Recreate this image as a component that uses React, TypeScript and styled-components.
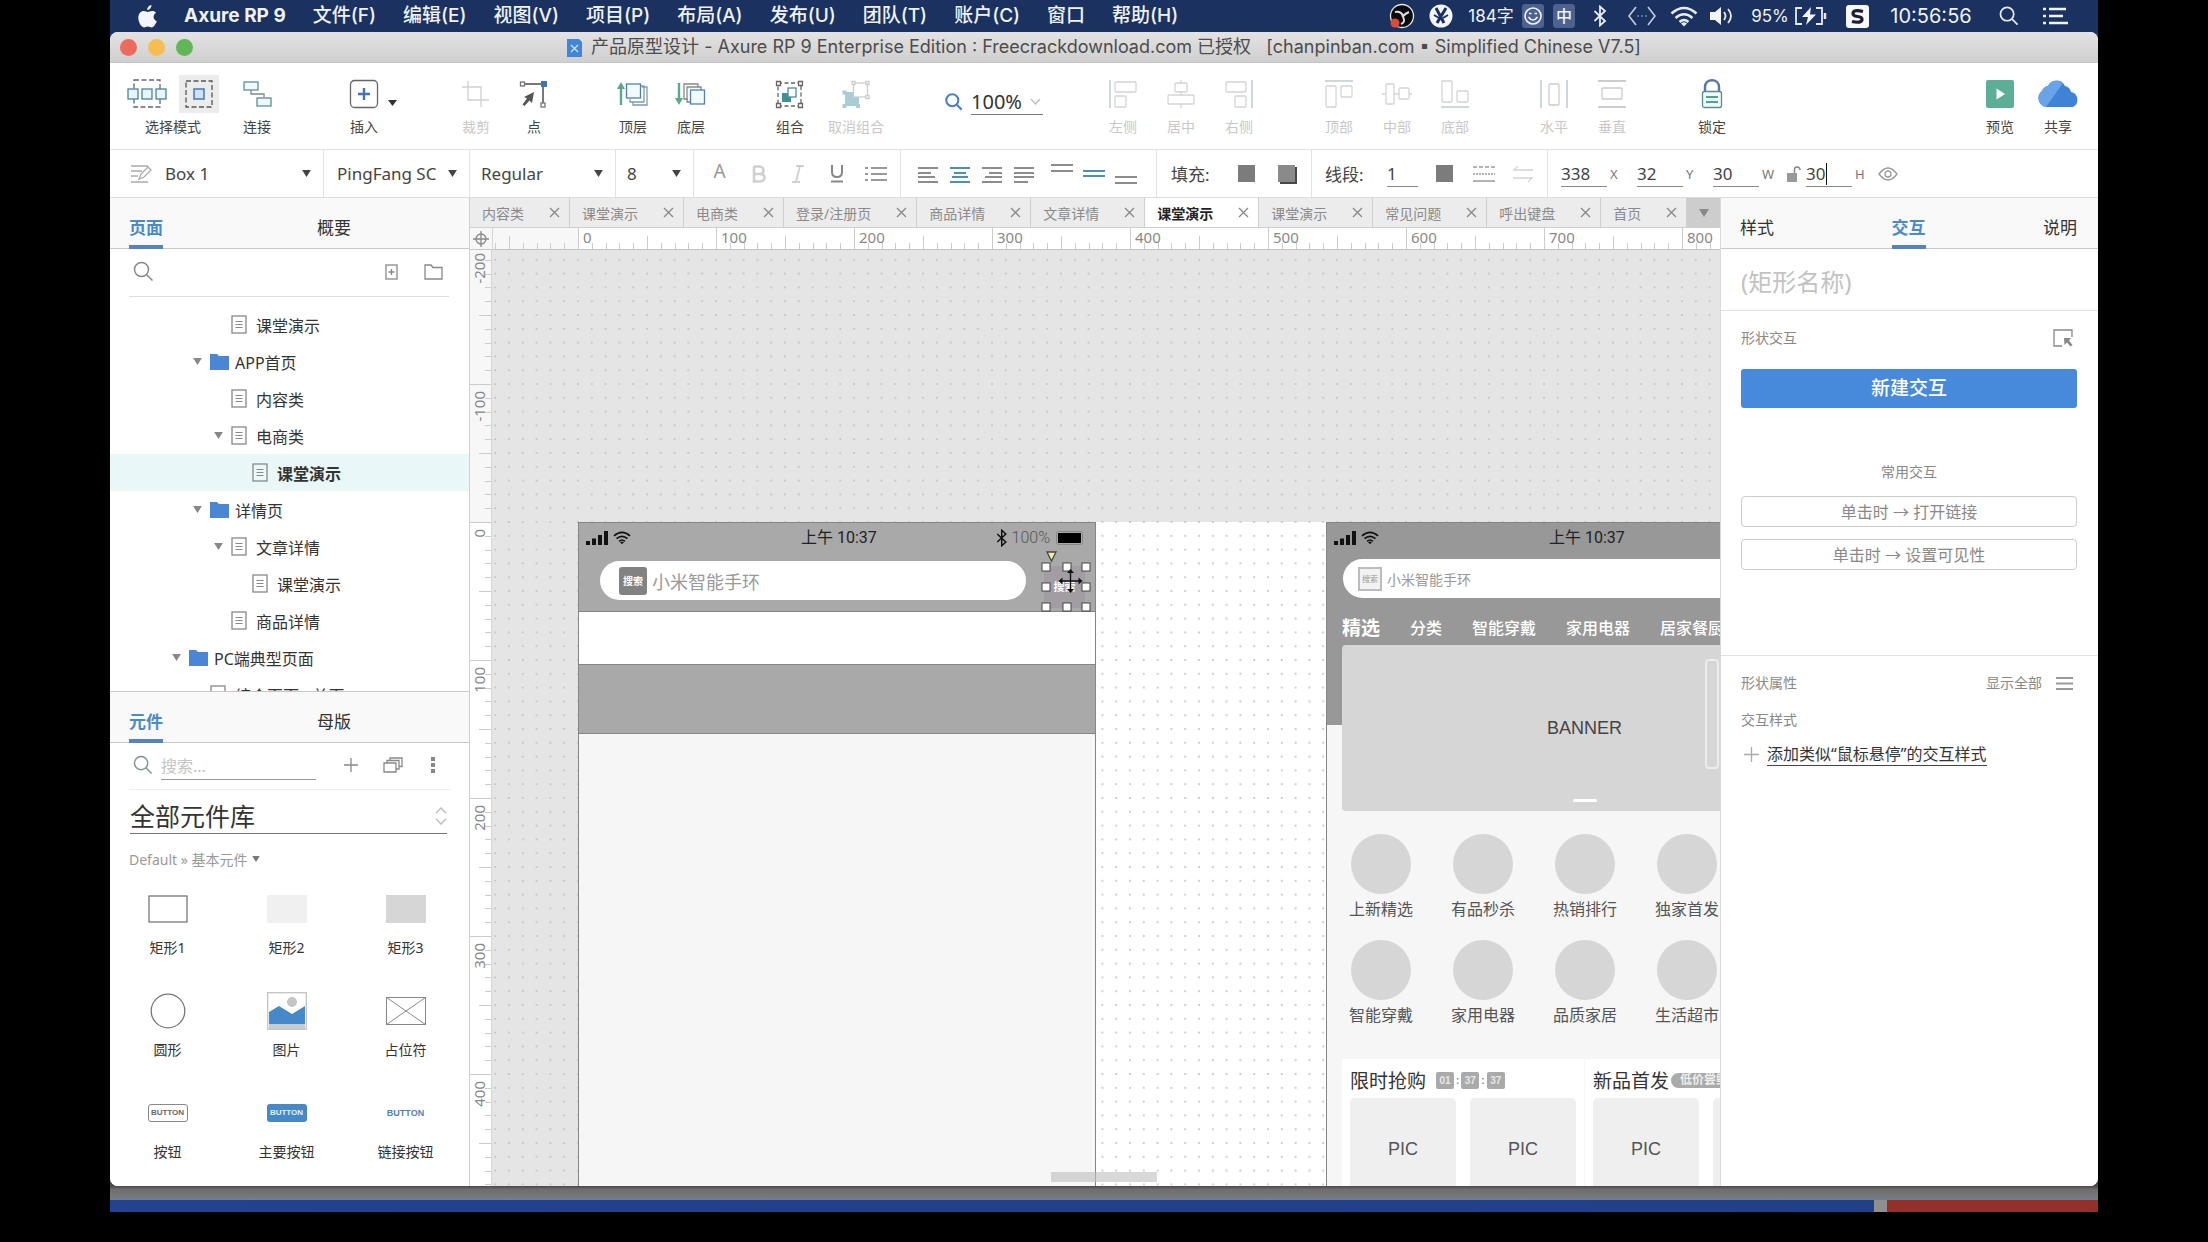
import React from "react";
import styled, { createGlobalStyle, css } from "styled-components";

const ui = `"Noto Sans", "Noto Sans CJK SC", sans-serif`;
const mac = `Inter, "Noto Sans CJK SC", sans-serif`;
const blue = "#4a8ac9";

const Global = createGlobalStyle`
  *, *::before, *::after { box-sizing: border-box; }
  body { margin: 0; background: #000; font-family: ${ui}; color: #444; }
  button, input, select { font: inherit; color: inherit; margin: 0; padding: 0; border: 0; background: none; border-radius: 0; outline: none; }
  button { cursor: pointer; }
  select { appearance: none; }
  ul { list-style: none; margin: 0; padding: 0; }
  h2, h3, p { margin: 0; font-weight: 400; }
  svg { display: block; flex: none; }
`;

/* ---------- desktop ---------- */
const Desktop = styled.div`
  height: 100vh;
  min-height: 800px;
  padding: 0 110px;
  display: flex;
  flex-direction: column;
  overflow: hidden;
`;
const MenuBar = styled.nav`
  flex: none;
  height: 32px;
  background: #1b3160;
  color: #eef2fa;
  display: flex;
  align-items: center;
  justify-content: space-between;
  font: 19px/30px ${mac};
  white-space: nowrap;
`;
const MenuSide = styled.div<{ $gap: number; $pad: string }>`
  display: flex;
  align-items: center;
  gap: ${(p) => p.$gap}px;
  padding: ${(p) => p.$pad};
`;
const MenuItem = styled.button<{ $bold?: boolean }>`
  font-weight: ${(p) => (p.$bold ? 700 : 500)};
  line-height: 30px;
`;
const Stat = styled.span<{ $w: number; $size?: number }>`
  width: ${(p) => p.$w}px;
  font-size: ${(p) => p.$size || 16}px;
  display: flex;
  align-items: center;
  justify-content: center;
`;
const ImeChip = styled.span`
  width: 22px;
  height: 24px;
  line-height: 24px;
  text-align: center;
  background: #4c6390;
  border-radius: 3px;
  font-weight: 500;
`;
const Backdrop = styled.div`
  flex: 1;
  min-height: 0;
  display: flex;
  flex-direction: column;
  background: linear-gradient(#1b3160 50%, #4c474a 50%);
`;
const Windowed = styled.div`
  flex: 1;
  min-height: 0;
  display: flex;
  flex-direction: column;
  background: #fff;
  border-radius: 8px;
  overflow: hidden;
`;
const Under = styled.div`
  flex: none;
  height: 56px;
  background: #000;
`;
const Shade = styled.div`
  height: 14px;
  background: linear-gradient(#4c474a, #6f6d6f 25%, #777 75%, #6f7f94);
`;
const Strip = styled.div`
  height: 12px;
  display: grid;
  grid-template-columns: 1fr 13px 211px;
  background: linear-gradient(90deg, #214390, #1f4189);
  & > span:nth-child(2) { background: #8f8f8f; }
  & > span:nth-child(3) { background: #93302a; }
`;
const TitleBar = styled.header`
  flex: none;
  height: 31px;
  display: grid;
  grid-template-columns: 100px 1fr 100px;
  align-items: center;
  background: linear-gradient(#e4e3e4, #cfcfcf);
  border-bottom: 1px solid #c4c4c4;
`;
const Lights = styled.div`
  display: flex;
  gap: 11px;
  padding-left: 10px;
`;
const Light = styled.button<{ $c: string }>`
  width: 17px;
  height: 17px;
  border-radius: 50%;
  background: ${(p) => p.$c};
`;
const Title = styled.div`
  display: flex;
  justify-content: center;
  align-items: center;
  gap: 9px;
  font: 18px/30px ${mac};
  color: #4c4c4c;
  white-space: pre;
`;

/* ---------- tool bar ---------- */
const ToolBar = styled.div`
  flex: none;
  height: 87px;
  display: flex;
  padding: 12px 11px 0 8px;
  border-bottom: 1px solid #e2e2e2;
  background: #fff;
`;
const ToolGroup = styled.div<{ $before?: number }>`
  display: flex;
  margin-left: ${(p) => (p.$before === undefined ? "auto" : p.$before + "px")};
`;
const ToolBtn = styled.button<{ $w?: number; $off?: boolean }>`
  width: ${(p) => p.$w || 58}px;
  height: 66px;
  display: grid;
  grid-template-rows: 38px 28px;
  justify-items: center;
  align-items: center;
  font-size: 14px;
  line-height: 20px;
  white-space: nowrap;
  color: ${(p) => (p.$off ? "#c8c8c8" : "#444")};
`;
const ModePair = styled.span`
  display: flex;
  gap: 12px;
`;
const ModeIcon = styled.span<{ $on?: boolean }>`
  width: 40px;
  height: 38px;
  display: grid;
  place-items: center;
  background: ${(p) => (p.$on ? "#ececec" : "none")};
`;
const Zoom = styled.label`
  width: 98px;
  height: 26px;
  margin-top: 14px;
  display: flex;
  align-items: center;
  gap: 8px;
`;
const ZoomSelect = styled.span`
  flex: 1;
  display: flex;
  align-items: center;
  border-bottom: 1px solid #777;
  select { width: 59px; font-size: 20px; line-height: 24px; height: 25px; color: #333; }
`;

/* ---------- style bar ---------- */
const StyleBar = styled.div`
  flex: none;
  height: 48px;
  display: flex;
  border-bottom: 1px solid #dcdcdc;
  background: #fff;
  font-size: 17px;
`;
const Cell = styled.div<{ $w?: number; $pl?: number }>`
  ${(p) => (p.$w ? `width: ${p.$w}px; border-right: 1px solid #e2e2e2;` : "flex: 1;")}
  padding-left: ${(p) => p.$pl || 0}px;
  display: flex;
  align-items: center;
  white-space: nowrap;
`;
const Pick = styled.label`
  flex: 1;
  height: 46px;
  padding-right: 12px;
  display: flex;
  align-items: center;
  select { flex: 1; min-width: 0; height: 30px; font-size: 17px; }
`;
const FmtBtn = styled.button<{ $w: number }>`
  width: ${(p) => p.$w}px;
  height: 40px;
  display: grid;
  place-items: center;
  font-size: 19px;
  color: #999;
`;
const Glyph = styled(FmtBtn)`
  align-items: start;
  line-height: 34px;
`;
const Spacer = styled.span<{ $w: number }>`
  width: ${(p) => p.$w}px;
`;
const CellLabel = styled.label<{ $w: number }>`
  width: ${(p) => p.$w}px;
`;
const NumField = styled.label<{ $w: number }>`
  position: relative;
  width: ${(p) => p.$w}px;
  display: flex;
  align-items: center;
  gap: 3px;
  font-size: 13px;
  color: #777;
`;
const NumInput = styled.input<{ $w?: number }>`
  width: ${(p) => p.$w || 46}px;
  height: 26px;
  font-size: 17px;
  color: #444;
  border-bottom: 1px solid #888;
`;
const Caret = styled.i`
  position: absolute;
  left: 20px;
  top: 2px;
  width: 1px;
  height: 22px;
  background: #111;
`;
const Swatch = styled.span<{ $deep?: boolean }>`
  width: 17px;
  height: 17px;
  background: ${(p) => (p.$deep ? "#8a8a8a" : "#7c7c7c")};
  ${(p) => p.$deep && css`box-shadow: 2px 2px 0 #484848;`}
`;

/* ---------- panels ---------- */
const Main = styled.div`
  flex: 1;
  min-height: 0;
  display: grid;
  grid-template-columns: 360px 1fr 378px;
`;
const Side = styled.aside`
  min-height: 0;
  display: flex;
  flex-direction: column;
  background: #fff;
`;
const LeftSide = styled(Side)`
  border-right: 1px solid #d0d0d0;
`;
const RightSide = styled(Side)`
  border-left: 1px solid #dadada;
`;
const PanelTabs = styled.div`
  flex: none;
  height: 51px;
  padding: 0 19px;
  display: flex;
  gap: 154px;
  background: #f9f9f9;
  border-bottom: 1px solid #c8c8c8;
`;
const SpreadTabs = styled(PanelTabs)`
  padding: 0 21px 0 19px;
  justify-content: space-between;
  gap: 0;
`;
const PanelTab = styled.button<{ $on?: boolean }>`
  height: 51px;
  padding: 13px 0 0;
  font-size: 17px;
  line-height: 24px;
  color: ${(p) => (p.$on ? blue : "#333")};
  font-weight: ${(p) => (p.$on ? 700 : 400)};
  border-bottom: 4px solid ${(p) => (p.$on ? "#5583bd" : "transparent")};
`;
const PageSearch = styled.div`
  flex: none;
  height: 48px;
  margin: 0 20px 0 19px;
  padding: 0 6px 2px 4px;
  display: flex;
  align-items: center;
  border-bottom: 1px solid #dedede;
  input { flex: 1; min-width: 0; height: 30px; }
`;
const IconBtn = styled.button<{ $ml?: number }>`
  margin-left: ${(p) => p.$ml || 0}px;
  display: grid;
  place-items: center;
`;
const Tree = styled.ul`
  flex: none;
  height: 395px;
  padding-top: 9px;
  overflow: hidden;
  border-bottom: 1px solid #c8c8c8;
`;
const Node = styled.li<{ $level: number; $on?: boolean }>`
  height: 37px;
  padding-left: ${(p) => 62 + p.$level * 21}px;
  display: flex;
  align-items: center;
  font-size: 16px;
  font-weight: ${(p) => (p.$on ? 700 : 400)};
  background: ${(p) => (p.$on ? "#e9f7f8" : "none")};
  color: #333;
  white-space: nowrap;
`;
const Twist = styled.span`
  width: 17px;
`;
const NodeIcon = styled.span`
  width: 25px;
`;
const LibSearch = styled.div`
  flex: none;
  height: 47px;
  margin: 0 18px 0 19px;
  padding: 0 0 3px 4px;
  display: flex;
  align-items: center;
  border-bottom: 1px solid #eee;
  input { width: 155px; height: 26px; margin: 4px 0 0 8px; font-size: 16px; border-bottom: 1px solid #999; }
  input::placeholder { color: #c4c4c4; opacity: 1; }
`;
const LibPick = styled.label`
  flex: none;
  height: 44px;
  margin: 0 22px 0 20px;
  padding-top: 8px;
  display: flex;
  align-items: center;
  border-bottom: 1px solid #777;
  select { flex: 1; height: 36px; font-size: 25px; color: #333; }
`;
const Crumb = styled.button`
  flex: none;
  height: 52px;
  padding: 0 0 2px 19px;
  display: flex;
  align-items: center;
  gap: 4px;
  font-size: 14px;
  color: #999;
`;
const LibGrid = styled.div`
  display: grid;
  grid-template-columns: repeat(3, 119px);
  grid-auto-rows: 102px;
  margin-left: -2px;
`;
const LibItem = styled.button`
  display: grid;
  grid-template-rows: 46px 32px 24px;
  place-items: center;
  font-size: 14px;
  line-height: 20px;
  color: #333;
`;
const MiniButton = styled.span<{ $kind: "plain" | "fill" | "link" }>`
  width: 40px;
  height: 18px;
  border-radius: 3px;
  display: grid;
  place-items: center;
  font: 700 8px/16px "Liberation Sans", sans-serif;
  ${(p) => p.$kind === "plain" && css`border: 1px solid #888; color: #666;`}
  ${(p) => p.$kind === "fill" && css`background: #4689c6; color: #e4f0fa;`}
  ${(p) => p.$kind === "link" && css`color: #5580b8; font-size: 9px;`}
`;

/* ---------- canvas ---------- */
const Work = styled.section`
  min-width: 0;
  min-height: 0;
  display: grid;
  grid-template-rows: 30px 22px 1fr;
  grid-template-columns: 22px 1fr;
`;
const TabStrip = styled.div`
  grid-column: 1 / 3;
  display: flex;
  background: #ececec;
  border-bottom: 1px solid #cfcfcf;
  overflow: hidden;
`;
const DocTab = styled.button<{ $on?: boolean }>`
  flex: none;
  padding: 0 9px 0 12px;
  display: flex;
  align-items: center;
  gap: 25px;
  font-size: 14px;
  color: ${(p) => (p.$on ? "#222" : "#8a8a8a")};
  font-weight: ${(p) => (p.$on ? 700 : 400)};
  background: ${(p) => (p.$on ? "#fff" : "none")};
  border-right: 1px solid #cfcfcf;
`;
const MoreTabs = styled.button`
  flex: 1;
  min-width: 30px;
  display: grid;
  place-items: center;
  background: #cdcdcd;
`;
const Corner = styled.div`
  display: grid;
  place-items: center;
  background: #f7f7f7;
  border-bottom: 1px solid #c4c4c4;
`;
const RulerX = styled.div`
  overflow: hidden;
  background: linear-gradient(90deg, #f7f7f7 85px, #fff 85px);
  border-bottom: 1px solid #c4c4c4;
  border-left: 1px solid #d5d5d5;
`;
const RulerY = styled.div`
  overflow: hidden;
  background: linear-gradient(#f7f7f7 272px, #fff 272px);
  border-right: 1px solid #d5d5d5;
`;
const Stage = styled.div`
  position: relative;
  overflow: hidden;
  background: #e5e5e5;
`;
const Dots = styled.svg`
  position: absolute;
  inset: 0;
  width: 100%;
  height: 100%;
`;
const Paper = styled.div`
  position: absolute;
  left: 86px;
  top: 272px;
  right: 0;
  bottom: 0;
  background: #fff;
`;
const ScrollThumb = styled.div`
  position: absolute;
  left: 559px;
  bottom: 4px;
  width: 106px;
  height: 10px;
  background: rgba(190, 190, 190, 0.6);
`;
const Phone = styled.div<{ $x: number }>`
  position: absolute;
  left: ${(p) => p.$x}px;
  top: 272px;
  bottom: 0;
  width: 518px;
  border: 1px solid #858585;
  border-bottom: 0;
  background: #f6f6f6;
  font-family: ${ui};
`;
const PhoneStatus = styled.div`
  height: 29px;
  padding: 0 10px 0 7px;
  display: grid;
  grid-template-columns: 215px auto 1fr;
  align-items: center;
  font: 16px/28px Roboto, "Noto Sans CJK SC", sans-serif;
  color: #222;
`;
const StatusIcons = styled.span<{ $end?: boolean }>`
  display: flex;
  align-items: center;
  gap: ${(p) => (p.$end ? 4 : 5)}px;
  justify-content: ${(p) => (p.$end ? "flex-end" : "flex-start")};
  font-weight: 300;
  color: #555;
`;
const HeadA = styled.div`
  height: 89px;
  background: #a9a9a9;
  border-bottom: 1px solid #858585;
`;
const SearchPill = styled.div<{ $small?: boolean }>`
  margin: ${(p) => (p.$small ? "7px 16px 0" : "9px 69px 0 21px")};
  height: 39px;
  padding-left: ${(p) => (p.$small ? 15 : 19)}px;
  border-radius: 20px;
  background: #fff;
  display: flex;
  align-items: center;
  gap: 5px;
  font-size: ${(p) => (p.$small ? 14 : 18)}px;
  color: #999;
`;
const SearchTag = styled.span<{ $line?: boolean }>`
  width: ${(p) => (p.$line ? 24 : 28)}px;
  height: ${(p) => (p.$line ? 24 : 28)}px;
  display: grid;
  place-items: center;
  font-size: 10px;
  line-height: 12px;
  ${(p) =>
    p.$line
      ? css`border: 2px solid #bcbcbc; background: #f2f2f2; color: #999; font-size: 8px;`
      : css`background: #828282; color: #fff; border-radius: 3px; font-weight: 700;`}
`;
const BandWhite = styled.div`
  height: 53px;
  background: #fff;
  border-bottom: 1px solid #858585;
`;
const BandGrey = styled.div`
  height: 69px;
  background: #a9a9a9;
  border-bottom: 1px solid #858585;
`;
const Picked = styled.div`
  position: absolute;
  left: 552px;
  top: 316px;
  width: 41px;
  height: 42px;
  background: #a19da2;
  color: #fff;
  font-size: 11px;
  line-height: 42px;
  text-align: center;
  font-weight: 700;
`;
const Handles = styled.svg`
  position: absolute;
  left: -6px;
  top: -18px;
`;
const HeadB = styled.div`
  height: 202px;
  background: #989898;
`;
const CatNav = styled.div`
  height: 44px;
  padding: 15px 0 0 15px;
  display: flex;
  align-items: center;
  gap: 30px;
  color: #fff;
  font-size: 16px;
  font-weight: 500;
  line-height: 24px;
  white-space: nowrap;
  strong { font-size: 19px; }
`;
const Banner = styled.div`
  height: 166px;
  margin: 3px 16px 0 15px;
  background: #d6d6d6;
  border-radius: 4px;
  display: grid;
  grid-template-rows: 1fr 12px;
  place-items: center;
  padding-top: 12px;
  font: 18px/24px "Liberation Sans", sans-serif;
  color: #444;
  &::after { content: ""; align-self: start; width: 24px; height: 3px; background: #fff; border-radius: 2px; }
`;
const ScrollShape = styled.div`
  position: absolute;
  left: 1213px;
  top: 409px;
  width: 14px;
  height: 110px;
  border: 2px solid #ececec;
  border-radius: 4px;
`;
const Cats = styled.div`
  display: grid;
  grid-template-columns: repeat(5, 102px);
  grid-auto-rows: 106px;
  margin: 23px 0 0 3px;
  height: 225px;
`;
const Cat = styled.div`
  display: flex;
  flex-direction: column;
  align-items: center;
  font-size: 16px;
  line-height: 30px;
  color: #555;
  &::before { content: ""; width: 60px; height: 60px; border-radius: 50%; background: #d6d6d6; }
`;
const Cards = styled.div`
  display: grid;
  grid-template-columns: 242px 242px;
  gap: 1px;
  margin-left: 15px;
`;
const Card = styled.div`
  height: 160px;
  padding: 4px 8px 0;
  background: #fff;
  overflow: hidden;
`;
const CardHead = styled.div`
  height: 35px;
  display: flex;
  align-items: center;
  font-size: 19px;
  line-height: 30px;
  color: #333;
  white-space: nowrap;
`;
const Timer = styled.span`
  margin-left: 10px;
  display: flex;
  gap: 2px;
  font: 700 10px/17px "Liberation Sans", sans-serif;
  color: #888;
  b { width: 18px; height: 17px; border-radius: 2px; background: #aaa; color: #e8e8e8; text-align: center; }
`;
const Promo = styled.span`
  margin-left: 2px;
  width: 66px;
  height: 15px;
  border-radius: 8px;
  background: #aaa;
  color: #eee;
  font-size: 12px;
  font-weight: 700;
  line-height: 14px;
  padding-left: 9px;
`;
const Pics = styled.div`
  display: grid;
  grid-template-columns: 106px 106px;
  gap: 14px;
`;
const Pic = styled.div`
  height: 130px;
  border-radius: 5px;
  background: #efefef;
  text-align: center;
  font: 18px/102px "Liberation Sans", sans-serif;
  color: #555;
`;

/* ---------- inspector ---------- */
const NameRow = styled.div`
  height: 62px;
  padding: 0 22px 0 20px;
  border-bottom: 1px solid #e2e2e2;
  input { width: 100%; height: 60px; padding-top: 4px; font-size: 24px; }
  input::placeholder { color: #c2c2c2; opacity: 1; }
`;
const Block = styled.section<{ $h?: number }>`
  ${(p) => p.$h && `height: ${p.$h}px; border-bottom: 1px solid #e2e2e2;`}
  padding: 0 21px 0 20px;
  display: flex;
  flex-direction: column;
`;
const BlockHead = styled.div<{ $h: number }>`
  height: ${(p) => p.$h}px;
  display: flex;
  align-items: center;
  justify-content: space-between;
  font-size: 14px;
  line-height: 20px;
  color: #888;
  padding: 0 4px 4px 0;
`;
const ShowAll = styled.button`
  display: flex;
  align-items: center;
  gap: 14px;
  font-size: 14px;
`;
const Primary = styled.button`
  height: 39px;
  border-radius: 3px;
  background: #4789db;
  color: #fff;
  font-size: 19px;
  font-weight: 500;
  line-height: 36px;
  padding-bottom: 2px;
`;
const Caption = styled.h3`
  margin-top: 52px;
  height: 36px;
  line-height: 24px;
  text-align: center;
  font-size: 14px;
  color: #888;
`;
const Ghost = styled.button`
  height: 31px;
  margin-bottom: 12px;
  border: 1px solid #ccc;
  border-radius: 4px;
  font-size: 16px;
  line-height: 28px;
  color: #888;
`;
const AddLink = styled.a`
  margin-top: 13px;
  display: flex;
  align-items: center;
  gap: 8px;
  padding-left: 3px;
  font-size: 16px;
  line-height: 22px;
  color: #333;
  text-decoration: none;
  span { border-bottom: 1px solid #444; }
`;

/* ---------- icons ---------- */
type SvgP = { w: number; h: number; c?: string; sw?: number; children: React.ReactNode };
const I = ({ w, h, c = "#888", sw = 1.3, children }: SvgP) => (
  <svg width={w} height={h} viewBox={`0 0 ${w} ${h}`} fill="none" stroke={c} strokeWidth={sw} aria-hidden="true">
    {children}
  </svg>
);
const Tri = ({ s = 9, c = "#444" }: { s?: number; c?: string }) => (
  <svg width={s} height={s - 2} viewBox="0 0 10 8" aria-hidden="true"><path d="M0 0H10L5 8Z" fill={c} /></svg>
);
const Mag = ({ s = 21, c = "#888", sw = 1.5 }: { s?: number; c?: string; sw?: number }) => (
  <svg width={s} height={s} viewBox="0 0 21 21" fill="none" stroke={c} strokeWidth={sw} aria-hidden="true">
    <circle cx="8.500" cy="8.500" r="7" /><path d="M13.500 13.500L19.500 19.500" />
  </svg>
);
const Bluetooth = ({ c, h = 22 }: { c: string; h?: number }) => (
  <svg width={(h * 14) / 22} height={h} viewBox="0 0 14 22" fill="none" stroke={c} strokeWidth="1.800" aria-hidden="true">
    <path d="M1.500 6L12 16L7 20.500V1.500L12 6L1.500 16" />
  </svg>
);
const Wifi = ({ w, c }: { w: number; c: string }) => (
  <svg width={w} height={w * 0.75} viewBox="0 0 28 21" fill="none" stroke={c} strokeWidth="2.600" aria-hidden="true">
    <path d="M1.500 7.500Q14 -3.500 26.500 7.500M5.500 12Q14 4.500 22.500 12M9.500 16Q14 12 18.500 16" /><path d="M11 17.500L14 20.500L17 17.500Q14 15 11 17.500" fill={c} stroke="none" />
  </svg>
);
const Signal = () => (
  <svg width="22" height="14" viewBox="0 0 22 14" fill="#111" aria-hidden="true">
    <path d="M0 10h4v4h-4zM6 7.500h4v6.500h-4zM12 4h4v10h-4zM18 0h4v14h-4z" />
  </svg>
);
const X = () => <I w={11} h={11} c="#888"><path d="M1 1L10 10M10 1L1 10" /></I>;
const pale = "#ccd8dd";

const toolIcons: Record<string, React.ReactNode> = {
  connect: <I w={29} h={28} c="#5b9199"><rect x="1" y="2" width="14" height="8" fill="#eff9fd" /><rect x="14" y="18" width="14" height="8" fill="#eff9fd" /><path d="M8 10V14H21V18" stroke="#888" /></I>,
  insert: <I w={70} h={30} c="#666"><rect x="21.500" y="1.500" width="27" height="27" rx="4" /><path d="M35 9V21M29 15H41" stroke="#4672b4" strokeWidth="2.400" /><path d="M59 21H68L63.500 27Z" fill="#333" stroke="none" /></I>,
  crop: <I w={30} h={28} c="#d0d0d0"><path d="M7 1V20H28M1 7H20V27" /></I>,
  point: <I w={30} h={28} c="#777"><path d="M5 4H24V24" strokeWidth="2" /><rect x="1.500" y="2" width="4" height="4" fill="#fff" /><rect x="22" y="23" width="4" height="4" fill="#fff" /><rect x="22" y="1" width="6" height="6" fill="#3f75b4" stroke="none" /><path d="M15 12L13 23L10.500 20.500L5.500 26L3.500 24.500L8 18.500L5 17Z" fill="#555" stroke="none" /></I>,
  front: <I w={32} h={26} c="#7f9bb0"><path d="M4 24V5" stroke="#5aa890" strokeWidth="2.400" /><path d="M0 8L4 1L8 8Z" fill="#5aa890" stroke="none" /><path d="M25 6H30V24H16V21M23 5H27V21H13V18" /><rect x="9.500" y="3" width="14" height="14" fill="#f3fafd" stroke="#5080a8" /></I>,
  back: <I w={32} h={26} c="#888"><path d="M4 2V20" stroke="#5aa890" strokeWidth="2.400" /><path d="M0 17L4 24L8 17Z" fill="#5aa890" stroke="none" /><path d="M13 18H9V3H23V6M16 21H12V6H26V9" /><rect x="15.500" y="9" width="14" height="14" fill="#f3fafd" stroke="#5080b8" /></I>,
  group: <I w={30} h={29} c="#666"><rect x="3" y="3" width="23" height="23" strokeDasharray="4 2.500" /><rect x="7" y="13" width="9" height="9" fill="#3f8f94" stroke="none" /><rect x="13" y="8" width="8" height="9" fill="#fff" stroke="#4a8a9c" /><path d="M1.500 1.500h4v4h-4zM23.500 1.500h4v4h-4zM1.500 23.500h4v4h-4zM23.500 23.500h4v4h-4z" fill="#fff" /></I>,
  ungroup: <I w={30} h={29} c="#ccc"><rect x="4" y="12" width="14" height="14" fill="#a9ccd5" stroke="none" /><rect x="12.500" y="3" width="14" height="14" fill="#fff" /><path d="M1.500 10.500h4v4h-4zM15 24h4v4h-4zM1.500 24h4v4h-4z" fill="#a9ccd5" stroke="none" /><path d="M11 1.500h3v3h-3zM25 1.500h3v3h-3zM25 15.500h3v3h-3z" fill="#fff" /></I>,
  left: <I w={28} h={28} c="#d4d4d4"><path d="M1 0V28" stroke={pale} strokeWidth="2" /><rect x="6" y="2" width="21" height="10" rx="1" /><rect x="6" y="16" width="11" height="11" rx="1" /></I>,
  center: <I w={28} h={28} c="#d4d4d4"><path d="M14 0V28" stroke={pale} /><rect x="8" y="3" width="12" height="9" rx="1" fill="#fff" /><rect x="1" y="15" width="26" height="9" rx="1" fill="#fff" /></I>,
  right: <I w={28} h={28} c="#d4d4d4"><path d="M27 0V28" stroke={pale} strokeWidth="2" /><rect x="1" y="2" width="20" height="10" rx="1" /><rect x="10" y="16" width="11" height="11" rx="1" /></I>,
  top: <I w={28} h={28} c="#d4d4d4"><path d="M0 1H28" stroke={pale} strokeWidth="2" /><rect x="1" y="6" width="10" height="21" rx="1" /><rect x="16" y="6" width="11" height="11" rx="1" /></I>,
  middle: <I w={30} h={28} c="#d4d4d4"><path d="M0 14H30" stroke={pale} /><rect x="4" y="4" width="8" height="20" rx="1" fill="#fff" /><rect x="17" y="8" width="10" height="11" rx="1" fill="#fff" /></I>,
  bottom: <I w={28} h={28} c="#d4d4d4"><path d="M0 27H28" stroke={pale} strokeWidth="2" /><rect x="1" y="1" width="10" height="21" rx="1" /><rect x="16" y="11" width="11" height="11" rx="1" /></I>,
  horiz: <I w={28} h={28} c="#ccc"><path d="M1 0V28M27 0V28" stroke={pale} strokeWidth="2" /><rect x="9" y="4" width="10" height="21" rx="1" /></I>,
  vert: <I w={28} h={28} c="#ccc"><path d="M0 1H28M0 27H28" stroke="#ccc" strokeWidth="2" /><rect x="4" y="8" width="20" height="11" rx="1" /></I>,
  lock: <I w={22} h={30} c="#5a8c98"><path d="M4 13V8C4 -1 18 -1 18 8V13" stroke="#5577a8" strokeWidth="2.400" /><rect x="1.500" y="12.500" width="19" height="16" rx="2" fill="#eef9f8" /><path d="M5 18H17M5 23H17" stroke="#4fa58c" strokeWidth="2.200" /></I>,
  preview: <I w={28} h={28}><rect width="28" height="28" rx="2" fill="#5cae95" stroke="none" /><path d="M10.500 8.500L19 14L10.500 19.500Z" fill="#fff" stroke="none" /></I>,
  share: <I w={42} h={28}><path d="M9 27A9 9 0 0 1 5 11A8 8 0 0 1 11 6A9.500 9.500 0 0 1 28 6A8 8 0 0 1 34 12A8 8 0 0 1 36 27Z" fill="#3f83d6" stroke="none" /><path d="M9 27A9 9 0 0 1 5 11A8 8 0 0 1 11 6A9.500 9.500 0 0 1 26 3Z" fill="#69a3e8" stroke="none" /></I>,
};

type ToolDef = [string, string, boolean?, number?];
const groups: { before?: number; tools: ToolDef[] }[] = [
  { before: 0, tools: [["connect", "连接"]] },
  { before: 43, tools: [["insert", "插入", false, 70]] },
  { before: 48, tools: [["crop", "裁剪", true], ["point", "点"]] },
  { before: 41, tools: [["front", "顶层"], ["back", "底层"]] },
  { before: 41, tools: [["group", "组合"], ["ungroup", "取消组合", true, 74]] },
];
const groups2: { before?: number; tools: ToolDef[] }[] = [
  { before: 51, tools: [["left", "左侧", true], ["center", "居中", true], ["right", "右侧", true]] },
  { before: 42, tools: [["top", "顶部", true], ["middle", "中部", true], ["bottom", "底部", true]] },
  { before: 41, tools: [["horiz", "水平", true], ["vert", "垂直", true]] },
  { before: 42, tools: [["lock", "锁定"]] },
  { tools: [["preview", "预览"], ["share", "共享"]] },
];
const Groups = ({ list }: { list: typeof groups }) => (
  <>
    {list.map((g, i) => (
      <ToolGroup key={i} $before={g.before}>
        {g.tools.map(([id, label, off, w]) => (
          <ToolBtn key={id} $off={off} $w={w}>{toolIcons[id]}<span>{label}</span></ToolBtn>
        ))}
      </ToolGroup>
    ))}
  </>
);

const Lines = ({ rows, c = "#8c8c8c" }: { rows: [number, number, number][]; c?: string }) => (
  <I w={22} h={24} c={c} sw={2}>{rows.map(([x, y, w], i) => <path key={i} d={`M${x} ${y}h${w}`} />)}</I>
);
const aligns: { rows: [number, number, number][]; on?: boolean }[] = [
  { rows: [[1, 6, 20], [1, 11, 13], [1, 15, 17], [1, 20, 20]] },
  { rows: [[1, 6, 20], [5, 11, 12], [3, 15, 16], [1, 20, 20]], on: true },
  { rows: [[1, 6, 20], [8, 11, 13], [4, 15, 17], [1, 20, 20]] },
  { rows: [[1, 6, 20], [1, 11, 20], [1, 15, 20], [1, 20, 14]] },
];
const valigns: { rows: [number, number, number][]; on?: boolean }[] = [
  { rows: [[0, 3, 22], [0, 9, 22]] },
  { rows: [[0, 9, 22], [0, 14, 22]], on: true },
  { rows: [[0, 15, 22], [0, 21, 22]] },
];

const PageIcon = () => <I w={16} h={19} c="#888"><rect x="1" y="1" width="14" height="17" /><path d="M4.500 6.500h7M4.500 9.500h7M4.500 12.500h7" strokeWidth="1" /></I>;
const FolderIcon = () => <I w={19} h={16}><path d="M0 0H7L9 2H19V16H0Z" fill="#4a86d4" stroke="none" /></I>;

const nodes: { t: string; level: number; kind?: "folder"; open?: boolean; on?: boolean }[] = [
  { t: "课堂演示", level: 2 },
  { t: "APP首页", level: 1, kind: "folder", open: true },
  { t: "内容类", level: 2 },
  { t: "电商类", level: 2, open: true },
  { t: "课堂演示", level: 3, on: true },
  { t: "详情页", level: 1, kind: "folder", open: true },
  { t: "文章详情", level: 2, open: true },
  { t: "课堂演示", level: 3 },
  { t: "商品详情", level: 2 },
  { t: "PC端典型页面", level: 0, kind: "folder", open: true },
  { t: "综合页面 - 首页", level: 1 },
];

const tabs = ["内容类", "课堂演示", "电商类", "登录/注册页", "商品详情", "文章详情", "课堂演示", "课堂演示", "常见问题", "呼出键盘", "首页"];

const UNIT = 13.8;
const ticksX = Array.from({ length: 90 }, (_, i) => i - 6);
const ticksY = Array.from({ length: 90 }, (_, i) => i - 19);

const TopRuler = () => (
  <svg width="100%" height="21" aria-hidden="true">
    {ticksX.map((n) => {
      const x = Math.round(85 + n * UNIT) + 0.5;
      const y = n % 10 === 0 ? 0 : n % 5 === 0 ? 8 : 15;
      return <path key={n} d={`M${x} ${y}V21`} stroke="#ccc" />;
    })}
    {Array.from({ length: 9 }, (_, i) => (
      <text key={i} x={90 + i * 138} y={15} fontSize="15" fill="#888" fontFamily="Noto Sans">{i * 100}</text>
    ))}
  </svg>
);
const LeftRuler = () => (
  <svg width="21" height="1600" aria-hidden="true">
    {ticksY.map((n) => {
      const y = Math.round(272 + n * UNIT) + 0.5;
      const x = n % 10 === 0 ? 0 : n % 5 === 0 ? 9 : 15;
      return <path key={n} d={`M${x} ${y}H21`} stroke="#ccc" />;
    })}
    {Array.from({ length: 7 }, (_, i) => i - 2).map((n) => (
      <text key={n} transform={`translate(15 ${279 + n * 138}) rotate(-90)`} textAnchor="end" fontSize="15" fill="#888" fontFamily="Noto Sans">{n * 100}</text>
    ))}
  </svg>
);

const cats = ["上新精选", "有品秒杀", "热销排行", "独家首发", "", "智能穿戴", "家用电器", "品质家居", "生活超市", ""];

const handlePts = [[8, 19], [29, 19], [48, 19], [8, 39], [48, 39], [8, 59], [29, 59], [48, 59]];

const CanvasStage = () => (
  <Stage>
    <Paper />
    <Dots aria-hidden="true">
      <defs>
        <pattern id="dots" x="79.100" y="265.100" width={UNIT} height={UNIT} patternUnits="userSpaceOnUse">
          <circle cx="6.900" cy="6.900" r="1" fill="#c3bfc1" />
        </pattern>
      </defs>
      <rect width="100%" height="100%" fill="url(#dots)" />
    </Dots>
    <Phone $x={86}>
      <HeadA>
        <PhoneStatus>
          <StatusIcons><Signal /><Wifi w={18} c="#111" /></StatusIcons>
          <span>上午 10:37</span>
          <StatusIcons $end>
            <Bluetooth c="#111" h={18} />100%
            <I w={31} h={14}><rect x="2.500" y="0.500" width="26" height="13" rx="2" stroke="#888" strokeWidth="1" /><rect x="4" y="2" width="23" height="10" fill="#000" stroke="none" /></I>
          </StatusIcons>
        </PhoneStatus>
        <SearchPill><SearchTag>搜索</SearchTag>小米智能手环</SearchPill>
      </HeadA>
      <BandWhite />
      <BandGrey />
    </Phone>
    <Picked>
      搜索
      <Handles width="60" height="70" viewBox="0 0 60 70" aria-hidden="true">
        <path d="M9 4H18L13.500 13Z" fill="#f4f0a0" stroke="#444" strokeWidth="1.300" />
        {handlePts.map(([x, y]) => <rect key={`${x}-${y}`} x={x - 4} y={y - 4} width="8" height="8" fill="#fff" stroke="#444" />)}
        <g fill="#111" stroke="#111" strokeWidth="1.400">
          <path d="M22 33H43M32.500 23V43" />
          <path d="M20.500 33l4-3.500v7zM44.500 33l-4-3.500v7zM32.500 21l-3.500 4h7zM32.500 45l-3.500-4h7z" stroke="none" />
        </g>
      </Handles>
    </Picked>
    <Phone $x={834}>
      <HeadB>
        <PhoneStatus>
          <StatusIcons><Signal /><Wifi w={18} c="#111" /></StatusIcons>
          <span>上午 10:37</span>
          <span />
        </PhoneStatus>
        <SearchPill $small><SearchTag $line>搜索</SearchTag>小米智能手环</SearchPill>
        <CatNav><strong>精选</strong><span>分类</span><span>智能穿戴</span><span>家用电器</span><span>居家餐厨</span></CatNav>
        <Banner>BANNER</Banner>
        <Cats>{cats.map((c, i) => <Cat key={i}>{c}</Cat>)}</Cats>
        <Cards>
          <Card>
            <CardHead>限时抢购<Timer><b>01</b>:<b>37</b>:<b>37</b></Timer></CardHead>
            <Pics><Pic>PIC</Pic><Pic>PIC</Pic></Pics>
          </Card>
          <Card>
            <CardHead>新品首发<Promo>低价尝鲜</Promo></CardHead>
            <Pics><Pic>PIC</Pic><Pic /></Pics>
          </Card>
        </Cards>
      </HeadB>
    </Phone>
    <ScrollShape />
    <ScrollThumb />
  </Stage>
);

export default function App() {
  return (
    <Desktop>
      <Global />
      <MenuBar>
        <MenuSide $gap={27} $pad="0 0 0 28px">
          <MenuItem aria-label="Apple">
            <svg width="19" height="23" viewBox="0 0 19 23" fill="#f2f5fb"><path d="M13.500 0C13.700 2.500 11.500 5 9.300 5C9 2.600 11.200 0.300 13.500 0ZM18 7.800C14.500 9.900 15 14.800 18.800 16.300C17.800 19 15.900 22.400 13.700 22.400C12.200 22.400 11.600 21.500 9.800 21.500C8 21.500 7.300 22.400 6 22.400C3.300 22.400 0.300 17 0.300 12.800C0.300 8.500 3 6 5.800 6C7.500 6 8.700 7 9.900 7C11 7 12.500 5.800 14.500 6C15.800 6 17.200 6.600 18 7.800Z" /></svg>
          </MenuItem>
          <MenuItem $bold>Axure RP 9</MenuItem>
          {["文件(F)", "编辑(E)", "视图(V)", "项目(P)", "布局(A)", "发布(U)", "团队(T)", "账户(C)", "窗口", "帮助(H)"].map((m) => <MenuItem key={m}>{m}</MenuItem>)}
        </MenuSide>
        <MenuSide $gap={0} $pad="0 30px 0 0">
          <Stat $w={40}><I w={26} h={26}><circle cx="13" cy="13" r="11.500" fill="#0c0c10" stroke="#e8e8e8" /><path d="M6 9Q13 8 14 14M20 9Q14 12 14 14M12 21Q17 19 14 14" stroke="#ddd" strokeWidth="2" /><circle cx="6" cy="20" r="4.500" fill="#e04a34" stroke="none" /></I></Stat>
          <Stat $w={38}><I w={24} h={24}><circle cx="12" cy="12" r="11.500" fill="#f2f5fb" stroke="none" /><path d="M7 4L15 19M17 4L8 19" stroke="#1b3160" strokeWidth="3" /><path d="M5 11L10 14M19 11L14 14" stroke="#1b3160" strokeWidth="2" /></I></Stat>
          <Stat $w={62} $size={17}>184字</Stat>
          <Stat $w={22}><I w={22} h={24} c="#f2f5fb" sw={1.6}><rect width="22" height="24" rx="3" fill="#4c6390" stroke="none" /><circle cx="11" cy="12" r="8" /><path d="M6.500 13Q11 19 15.500 13M7 9.500h2.500M12.500 9.500H15" /></I></Stat>
          <Stat $w={40}><ImeChip>中</ImeChip></Stat>
          <Stat $w={32}><Bluetooth c="#e6ebf5" /></Stat>
          <Stat $w={52}><I w={28} h={20} c="#c4cde0" sw={1.6}><path d="M8 1L1 10L8 19M20 1L27 10L20 19" /><path d="M9 10H19" strokeDasharray="2 2" stroke="#7486ac" /></I></Stat>
          <Stat $w={32}><Wifi w={28} c="#e6ebf5" /></Stat>
          <Stat $w={44}><I w={24} h={20} c="#e6ebf5" sw={1.8}><path d="M0 6H5L11 1V19L5 14H0Z" fill="#f2f5fb" stroke="none" /><path d="M14 6Q17 10 14 14M18 3Q24 10 18 17" /></I></Stat>
          <Stat $w={52} $size={17}>95%</Stat>
          <Stat $w={30}><I w={34} h={20} c="#e6ebf5" sw={1.8}><path d="M8 2H2V18H8M22 2H28V18H22" /><path d="M17 1L8 11H14L12 19L22 8.500H16Z" fill="#f2f5fb" stroke="none" /><path d="M31 7V13" strokeWidth="2.500" /></I></Stat>
          <Stat $w={62}><I w={23} h={23}><rect width="23" height="23" rx="3" fill="#f6f8fc" stroke="none" /><path d="M17 6.500Q7 4 7 8.500Q7 11 11.500 11.500Q16.500 12 16 15Q15 18.500 6 16.500" stroke="#1b1f30" strokeWidth="3.200" /></I></Stat>
          <Stat $w={86} $size={20}>10:56:56</Stat>
          <Stat $w={70}><Mag s={20} c="#e6ebf5" sw={1.8} /></Stat>
          <Stat $w={24}><I w={26} h={18} c="#f2f5fb" sw={2.6}><path d="M0 2H3M0 9H3M0 16H3M6 2H23M6 9H20M6 16H25" /></I></Stat>
        </MenuSide>
      </MenuBar>
      <Backdrop>
        <Windowed>
          <TitleBar>
            <Lights><Light $c="#ec6a5e" aria-label="关闭" /><Light $c="#f4bf50" aria-label="最小化" /><Light $c="#61b655" aria-label="缩放" /></Lights>
            <Title>
              <I w={15} h={19}><path d="M0 1H12L15 4V19H0Z" fill="#3f86d8" stroke="none" /><path d="M4 7L11 14M11 7L4 14" stroke="#cfe2f7" /></I>
              {"产品原型设计 - Axure RP 9 Enterprise Edition : Freecrackdownload.com 已授权   [chanpinban.com ▪ Simplified Chinese V7.5]"}
            </Title>
          </TitleBar>
          <ToolBar>
            <ToolBtn $w={110}>
              <ModePair>
                <ModeIcon><I w={40} h={30} c="#666"><rect x="7" y="1" width="26" height="27" strokeDasharray="5 2.500" /><g fill="#e8f6fc" stroke="#4a8298"><rect x="1" y="10" width="10" height="10" /><rect x="15" y="10" width="10" height="10" /><rect x="29" y="10" width="10" height="10" /></g></I></ModeIcon>
                <ModeIcon $on><I w={30} h={30} c="#555"><rect x="2" y="2" width="26" height="26" strokeDasharray="5 2.500" /><rect x="10" y="10" width="10" height="10" fill="#cfe2f5" stroke="#4f7fb8" strokeWidth="1.600" /></I></ModeIcon>
              </ModePair>
              <span>选择模式</span>
            </ToolBtn>
            <Groups list={groups} />
            <ToolGroup $before={52}>
              <Zoom>
                <Mag s={18} c="#4a7fc0" sw={2.4} />
                <ZoomSelect>
                  <select aria-label="缩放比例" defaultValue="100%"><option>100%</option></select>
                  <I w={11} h={8} c="#bbb"><path d="M1 1L5.500 6L10 1" /></I>
                </ZoomSelect>
              </Zoom>
            </ToolGroup>
            <Groups list={groups2} />
          </ToolBar>
          <StyleBar>
            <Cell $w={214} $pl={20}>
              <I w={22} h={20} c="#aaa"><path d="M1 2H18M1 7H12M1 12H8M1 18H18M9 15L11 10L18 3L21 6L14 13Z" /></I>
              <Spacer $w={13} />
              <Pick><select aria-label="样式" defaultValue="Box 1"><option>Box 1</option></select><Tri /></Pick>
            </Cell>
            <Cell $w={146} $pl={13}><Pick><select aria-label="字体" defaultValue="PingFang SC"><option>PingFang SC</option></select><Tri /></Pick></Cell>
            <Cell $w={146} $pl={11}><Pick><select aria-label="字重" defaultValue="Regular"><option>Regular</option></select><Tri /></Pick></Cell>
            <Cell $w={78} $pl={11}><Pick><select aria-label="字号" defaultValue="8"><option>8</option></select><Tri /></Pick></Cell>
            <Cell $w={207} $pl={6}>
              <Glyph $w={39}>A</Glyph>
              <FmtBtn $w={39} aria-label="粗体"><I w={16} h={18} c="#d0d0d0" sw={2.6}><path d="M3 1.500V16.500H9Q13.500 16 13.500 12.500Q13.500 9 9 9H3M3 1.500H8.500Q12.500 2 12.500 5.500Q12.500 9 8.500 9" /></I></FmtBtn>
              <FmtBtn $w={39} aria-label="斜体"><I w={14} h={18} c="#cfcfcf" sw={1.8}><path d="M5 1H13M1 17H9M9 1L5 17" /></I></FmtBtn>
              <FmtBtn $w={39} aria-label="下划线"><I w={14} h={18} c="#888" sw={2}><path d="M2 0V7Q2 12 7 12Q12 12 12 7V0M1 16.500H13" /></I></FmtBtn>
              <FmtBtn $w={39} aria-label="列表"><I w={22} h={16} c="#999" sw={2}><path d="M0 2H3M0 8H3M0 14H3M6 2H22M6 8H22M6 14H22" /></I></FmtBtn>
            </Cell>
            <Cell $w={256} $pl={11}>
              {aligns.map((a, i) => <FmtBtn key={i} $w={32} aria-label="对齐"><Lines rows={a.rows} c={a.on ? "#4f8fb4" : undefined} /></FmtBtn>)}
              <Spacer $w={6} />
              {valigns.map((a, i) => <FmtBtn key={i} $w={32} aria-label="垂直对齐"><Lines rows={a.rows} c={a.on ? "#4f8fb4" : undefined} /></FmtBtn>)}
            </Cell>
            <Cell $w={155} $pl={14}>
              <CellLabel $w={55} htmlFor="fill">填充:</CellLabel>
              <FmtBtn id="fill" $w={40}><Swatch /></FmtBtn>
              <FmtBtn $w={40} aria-label="阴影"><Swatch $deep /></FmtBtn>
            </Cell>
            <Cell $w={236} $pl={13}>
              <CellLabel $w={62} htmlFor="line">线段:</CellLabel>
              <NumInput id="line" $w={31} defaultValue="1" />
              <Spacer $w={7} />
              <FmtBtn $w={39} aria-label="线条颜色"><Swatch /></FmtBtn>
              <FmtBtn $w={39} aria-label="线型"><I w={22} h={18} c="#999"><path d="M0 2H22" strokeDasharray="4 2" /><path d="M0 9H22" strokeDasharray="2 1" /><path d="M0 16H22" /></I></FmtBtn>
              <FmtBtn $w={39} aria-label="箭头"><I w={20} h={16} c="#d4d4d4"><path d="M20 4H1L5 0M0 12H19L15 16" /></I></FmtBtn>
            </Cell>
            <Cell $pl={13}>
              <NumField $w={76}><NumInput defaultValue="338" />X</NumField>
              <NumField $w={76}><NumInput defaultValue="32" />Y</NumField>
              <NumField $w={69}><NumInput defaultValue="30" />W</NumField>
              <FmtBtn $w={24} aria-label="锁定比例"><I w={14} h={16}><path d="M0 7H10V16H0Z" fill="#999" stroke="none" /><path d="M7.500 7V3.500Q7.500 1 10 1Q13 1 13 4" strokeWidth="1.500" /></I></FmtBtn>
              <NumField $w={72}><NumInput defaultValue="30" />H<Caret /></NumField>
              <IconBtn aria-label="可见性"><I w={20} h={14} c="#999"><path d="M1 7Q10 -5 19 7Q10 19 1 7Z" /><circle cx="10" cy="7" r="3" /></I></IconBtn>
            </Cell>
          </StyleBar>
          <Main>
            <LeftSide>
              <PanelTabs><PanelTab $on>页面</PanelTab><PanelTab>概要</PanelTab></PanelTabs>
              <PageSearch>
                <Mag />
                <input aria-label="搜索页面" />
                <IconBtn aria-label="添加页面"><I w={13} h={16}><rect x="1" y="1" width="11" height="14" /><path d="M6.500 5V11M3.500 8H9.500" /></I></IconBtn>
                <IconBtn $ml={26} aria-label="添加文件夹"><I w={19} h={16}><path d="M1 1H7L9 3.500H18V15H1Z" /></I></IconBtn>
              </PageSearch>
              <Tree>
                {nodes.map((n, i) => (
                  <Node key={i} $level={n.level} $on={n.on}>
                    <Twist>{n.open && <Tri c="#888" />}</Twist>
                    <NodeIcon>{n.kind ? <FolderIcon /> : <PageIcon />}</NodeIcon>
                    {n.t}
                  </Node>
                ))}
              </Tree>
              <PanelTabs><PanelTab $on>元件</PanelTab><PanelTab>母版</PanelTab></PanelTabs>
              <LibSearch>
                <Mag s={20} c="#7f9097" />
                <input aria-label="搜索元件" placeholder="搜索..." />
                <IconBtn $ml={28} aria-label="添加"><I w={14} h={14}><path d="M7 0V14M0 7H14" /></I></IconBtn>
                <IconBtn $ml={25} aria-label="库"><I w={20} h={16}><path d="M1 6H13V15H1ZM4 6V3.500H16V12H13M7 3.500V1H19V9.500H16" /></I></IconBtn>
                <IconBtn $ml={28} aria-label="更多"><I w={4} h={16}><path d="M0 0h4v4H0zM0 6h4v4H0zM0 12h4v4H0z" fill="#888" stroke="none" /></I></IconBtn>
              </LibSearch>
              <LibPick>
                <select aria-label="元件库" defaultValue="全部元件库"><option>全部元件库</option></select>
                <I w={12} h={18} c="#bbb"><path d="M1 6L6 1L11 6M1 12L6 17L11 12" /></I>
              </LibPick>
              <Crumb>Default » 基本元件 <Tri s={8} c="#777" /></Crumb>
              <LibGrid>
                <LibItem><I w={40} h={28} c="#777"><rect x="1" y="1" width="38" height="26" /></I><span>矩形1</span></LibItem>
                <LibItem><I w={40} h={28}><rect width="40" height="28" fill="#f0f0f0" stroke="none" /></I><span>矩形2</span></LibItem>
                <LibItem><I w={40} h={28}><rect width="40" height="28" fill="#d6d6d6" stroke="none" /></I><span>矩形3</span></LibItem>
                <LibItem><I w={36} h={36} c="#777"><circle cx="18" cy="18" r="16.800" /></I><span>圆形</span></LibItem>
                <LibItem><I w={40} h={38}><rect x="0.700" y="0.700" width="38.600" height="36.600" stroke="#c4c4c4" fill="#fff" /><circle cx="25" cy="10" r="5" fill="#c4c4c4" stroke="none" /><path d="M2 20L12 14L25 22L38 14V32H2Z" fill="#4689c9" stroke="none" /><path d="M2 32H38V37H2Z" fill="#c6cbd0" stroke="none" /></I><span>图片</span></LibItem>
                <LibItem><I w={40} h={28} c="#888" sw={1}><rect x="0.500" y="0.500" width="39" height="27" /><path d="M0.500 0.500L39.500 27.500M39.500 0.500L0.500 27.500" /></I><span>占位符</span></LibItem>
                <LibItem><MiniButton $kind="plain">BUTTON</MiniButton><span>按钮</span></LibItem>
                <LibItem><MiniButton $kind="fill">BUTTON</MiniButton><span>主要按钮</span></LibItem>
                <LibItem><MiniButton $kind="link">BUTTON</MiniButton><span>链接按钮</span></LibItem>
              </LibGrid>
            </LeftSide>
            <Work>
              <TabStrip>
                {tabs.map((t, i) => <DocTab key={i} $on={i === 6}>{t}<X /></DocTab>)}
                <MoreTabs aria-label="更多标签"><Tri s={10} c="#888" /></MoreTabs>
              </TabStrip>
              <Corner><I w={16} h={16}><circle cx="8" cy="8" r="5" /><path d="M8 0V16M0 8H16" /></I></Corner>
              <RulerX><TopRuler /></RulerX>
              <RulerY><LeftRuler /></RulerY>
              <CanvasStage />
            </Work>
            <RightSide>
              <SpreadTabs><PanelTab>样式</PanelTab><PanelTab $on>交互</PanelTab><PanelTab>说明</PanelTab></SpreadTabs>
              <NameRow><input aria-label="形状名称" placeholder="(矩形名称)" /></NameRow>
              <Block $h={345}>
                <BlockHead $h={58}>形状交互<IconBtn aria-label="选择目标"><I w={20} h={18}><path d="M19 8V1H1V17H9" /><path d="M11 9H18L16 11.500L19.500 16L17.500 17.500L14 13.500L11.500 16Z" fill="#888" stroke="none" /></I></IconBtn></BlockHead>
                <Primary>新建交互</Primary>
                <Caption>常用交互</Caption>
                <Ghost>单击时 → 打开链接</Ghost>
                <Ghost>单击时 → 设置可见性</Ghost>
              </Block>
              <Block>
                <BlockHead $h={58}>形状属性<ShowAll>显示全部<I w={17} h={15} c="#999" sw={2.2}><path d="M0 2H17M0 7.500H17M0 13H17" /></I></ShowAll></BlockHead>
                <BlockHead $h={16}>交互样式</BlockHead>
                <AddLink href="#"><I w={15} h={15} c="#aaa"><path d="M7.500 0V15M0 7.500H15" /></I><span>添加类似“鼠标悬停”的交互样式</span></AddLink>
              </Block>
            </RightSide>
          </Main>
        </Windowed>
      </Backdrop>
      <Under>
        <Shade />
        <Strip><span /><span /><span /></Strip>
      </Under>
    </Desktop>
  );
}
